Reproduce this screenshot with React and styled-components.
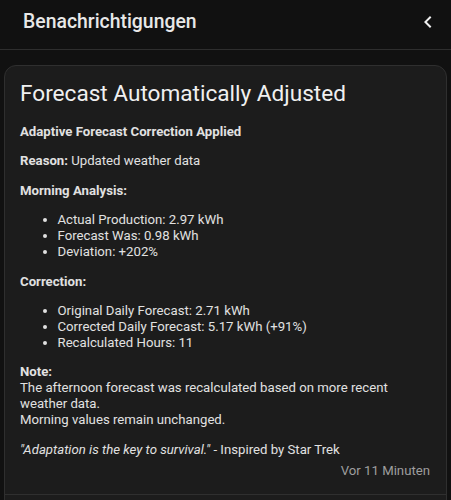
import React from 'react';
import styled, { createGlobalStyle } from 'styled-components';

const GlobalStyle = createGlobalStyle`
  html, body {
    margin: 0;
    padding: 0;
    background: #111111;
  }
  body {
    font-family: Roboto, 'Noto Sans', sans-serif;
    color: #e1e1e1;
    -webkit-font-smoothing: antialiased;
  }
`;

const morning = [
  'Actual Production: 2.97 kWh',
  'Forecast Was: 0.98 kWh',
  'Deviation: +202%',
];

const correction = [
  'Original Daily Forecast: 2.71 kWh',
  'Corrected Daily Forecast: 5.17 kWh (+91%)',
  'Recalculated Hours: 11',
];

export default function App() {
  return (
    <>
      <GlobalStyle />
      <Drawer>
        <Header>
          <HeaderTitle>Benachrichtigungen</HeaderTitle>
          <CloseButton aria-label='close'>
            <svg width='24' height='24' viewBox='0 0 24 24'>
              <path d='M15.41 16.58 10.83 12l4.58-4.59L14 6l-6 6 6 6z' fill='currentColor' />
            </svg>
          </CloseButton>
        </Header>
        <List>
          <Card>
            <CardHeader>Forecast Automatically Adjusted</CardHeader>
            <Markdown>
              <p>
                <strong>Adaptive Forecast Correction Applied</strong>
              </p>
              <p>
                <strong>Reason:</strong> Updated weather data
              </p>
              <p>
                <strong>Morning Analysis:</strong>
              </p>
              <ul>
                {morning.map((item) => (
                  <li key={item}>{item}</li>
                ))}
              </ul>
              <p>
                <strong>Correction:</strong>
              </p>
              <ul>
                {correction.map((item) => (
                  <li key={item}>{item}</li>
                ))}
              </ul>
              <p>
                <strong>Note:</strong>
                <br />
                The afternoon forecast was recalculated based on more recent weather data.
                <br />
                Morning values remain unchanged.
              </p>
              <p>
                <em>"Adaptation is the key to survival."</em> - Inspired by Star Trek
              </p>
            </Markdown>
            <Time>Vor 11 Minuten</Time>
            <Actions />
          </Card>
        </List>
      </Drawer>
    </>
  );
}

const Drawer = styled.div`
  width: 451px;
  height: 500px;
  overflow: hidden;
  background: #111111;
`;

const Header = styled.header`
  display: flex;
  align-items: center;
  justify-content: space-between;
  box-sizing: border-box;
  height: 50px;
  padding: 0 11px 0 23px;
  border-bottom: 1px solid #2e2e2e;
`;

const HeaderTitle = styled.h1`
  margin: 0;
  padding-bottom: 6px;
  font-size: 19.4px;
  font-weight: 500;
  color: #e8e8e8;
`;

const CloseButton = styled.button`
  display: flex;
  align-items: center;
  justify-content: center;
  width: 24px;
  height: 24px;
  margin-bottom: 5px;
  padding: 0;
  border: 0;
  background: none;
  color: #f0f0f0;
`;

const List = styled.div`
  padding: 15px 4px 0;
`;

const Card = styled.div`
  background: #1c1c1c;
  border: 1px solid #2f2f2f;
  border-radius: 12px;
`;

const CardHeader = styled.div`
  padding: 12px 15px 0;
  font-size: 22.6px;
  line-height: 32px;
  font-weight: 400;
  color: #f0f0f0;
`;

const Markdown = styled.div`
  padding: 0 15px;
  font-size: 13.2px;
  line-height: 16px;
  color: #e1e1e1;

  p {
    margin: 13.4px 0;
  }

  p:first-child {
    margin-top: 14px;
  }

  p:last-child {
    margin-bottom: 4px;
  }

  strong {
    font-weight: 700;
  }

  ul {
    margin: 13.4px 0;
    padding-left: 37.5px;
  }
`;

const Time = styled.div`
  padding: 1px 16px 15px;
  text-align: right;
  font-size: 13.2px;
  line-height: 16px;
  color: #9e9e9e;
`;

const Actions = styled.div`
  height: 40px;
  border-top: 1px solid #2f2f2f;
`;
